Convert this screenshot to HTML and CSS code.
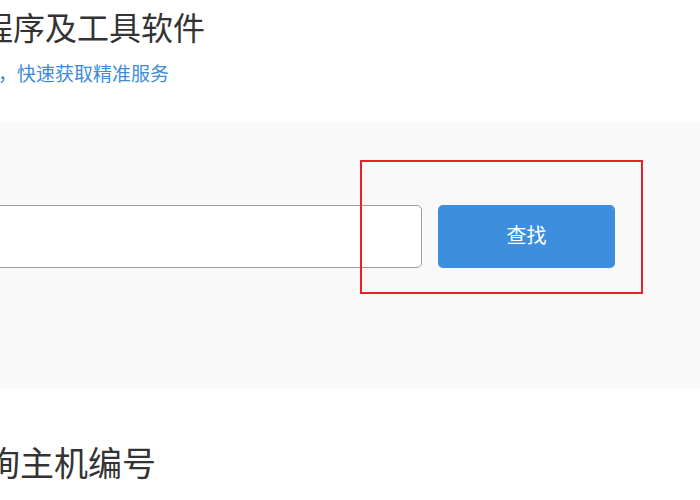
FILE: index.html
```html
<!DOCTYPE html>
<html lang="zh-CN">
<head>
<meta charset="utf-8">
<title>驱动程序及工具软件</title>
<link rel="stylesheet" href="styles.css">
</head>
<body>
  <header class="intro">
    <h1 class="title">驱动程序及工具软件</h1>
    <p class="subtitle">输入主机编号，快速获取精准服务</p>
  </header>
  <section class="search-band">
    <div class="search-row">
      <input class="search-input" type="text" aria-label="主机编号">
      <button class="search-btn" type="button">查找</button>
    </div>
    <div class="highlight"></div>
  </section>
  <h2 class="section-title">查询主机编号</h2>
</body>
</html>
```
FILE: styles.css
```css
html, body {
  margin: 0;
  padding: 0;
  background: #ffffff;
  overflow: hidden;
  font-family: "Noto Sans CJK SC", "Noto Sans", "Liberation Sans", sans-serif;
}

.intro {
  height: 122px;
  padding-top: 6px;
  box-sizing: border-box;
}

.title {
  margin: 0 0 0 -83px;
  font-size: 32px;
  line-height: 40px;
  font-weight: 400;
  color: #333333;
  white-space: nowrap;
}

.subtitle {
  margin: 13px 0 0 -116px;
  font-size: 19px;
  line-height: 28px;
  color: #3d8bd9;
  white-space: nowrap;
}

.search-band {
  position: relative;
  height: 267px;
  background: #f9f9f9;
  padding-top: 83px;
  box-sizing: border-box;
}

.search-row {
  display: flex;
  gap: 16px;
  margin-left: -200px;
}

.search-input {
  width: 622px;
  height: 63px;
  box-sizing: border-box;
  border: 1px solid #9e9e9e;
  border-radius: 5px;
  background: #ffffff;
  outline: none;
  padding: 0 14px;
}

.search-btn {
  width: 177px;
  height: 63px;
  border: none;
  border-radius: 5px;
  background: #3e8ede;
  color: #ffffff;
  font-family: inherit;
  font-size: 20px;
  padding: 0 0 4px 0;
}

.highlight {
  position: absolute;
  left: 360px;
  top: 38px;
  width: 283px;
  height: 134px;
  box-sizing: border-box;
  border: 2px solid #e62129;
}

.section-title {
  margin: 52px 0 0 -48px;
  font-size: 34px;
  line-height: 42px;
  font-weight: 400;
  color: #333333;
  white-space: nowrap;
}
```
